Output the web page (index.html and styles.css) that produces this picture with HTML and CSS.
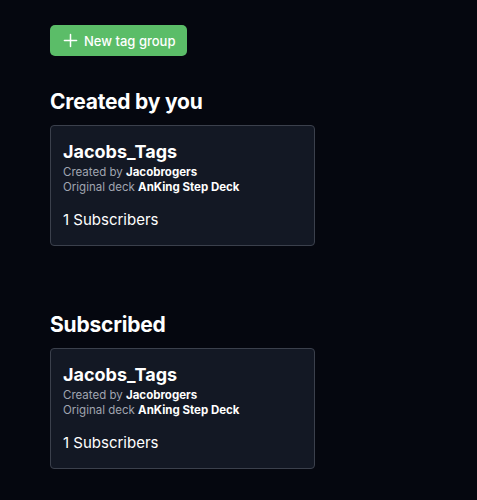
FILE: index.html
```html
<!DOCTYPE html>
<html>
<head>
<meta charset="utf-8">
<link rel="stylesheet" href="styles.css">
</head>
<body>
<main class="page">
  <button class="btn-new">
    <svg class="plus" viewBox="0 0 16 16" width="15" height="15"><path d="M8 1.5v13M1.5 8h13" stroke="#fff" stroke-width="1.6" stroke-linecap="round" fill="none"/></svg>
    <span>New tag group</span>
  </button>

  <section class="section">
    <h2 class="section-title">Created by you</h2>
    <div class="card">
      <h3 class="card-title">Jacobs_Tags</h3>
      <div class="meta">Created by <b>Jacobrogers</b></div>
      <div class="meta">Original deck <b>AnKing Step Deck</b></div>
      <div class="subs">1 Subscribers</div>
    </div>
  </section>

  <section class="section section-sub">
    <h2 class="section-title">Subscribed</h2>
    <div class="card">
      <h3 class="card-title">Jacobs_Tags</h3>
      <div class="meta">Created by <b>Jacobrogers</b></div>
      <div class="meta">Original deck <b>AnKing Step Deck</b></div>
      <div class="subs">1 Subscribers</div>
    </div>
  </section>
</main>
</body>
</html>
```
FILE: styles.css
```css
html, body {
  margin: 0;
  padding: 0;
  background: #05070f;
}
body {
  font-family: Inter, "Noto Sans", sans-serif;
  color: #fff;
}
.page {
  padding: 25px 50px;
  display: flex;
  flex-direction: column;
  align-items: flex-start;
}
.btn-new {
  display: flex;
  align-items: center;
  gap: 6px;
  height: 31px;
  padding: 0 12px 0 13px;
  background: #5bbd68;
  border: none;
  border-radius: 5px;
  color: #fff;
  font-family: inherit;
  font-size: 13px;
  font-weight: 500;
}
.plus { display: block; }
.section {
  margin-top: 33px;
  display: flex;
  flex-direction: column;
}
.section-sub { margin-top: 66px; }
.section-title {
  margin: 0 0 11px;
  font-size: 21px;
  line-height: 25px;
  font-weight: 700;
  letter-spacing: -0.2px;
}
.card {
  box-sizing: border-box;
  width: 265px;
  height: 121px;
  padding: 15px 12px;
  background: #131824;
  border: 1px solid #3b404c;
  border-radius: 4px;
}
.card-title {
  margin: 0 0 2px;
  font-size: 18px;
  line-height: 22px;
  font-weight: 700;
}
.meta {
  font-size: 11.5px;
  line-height: 15px;
  color: #a0a5b0;
}
.meta b { color: #fff; font-weight: 700; }
.subs {
  margin-top: 15px;
  font-size: 15px;
  line-height: 20px;
}
```
